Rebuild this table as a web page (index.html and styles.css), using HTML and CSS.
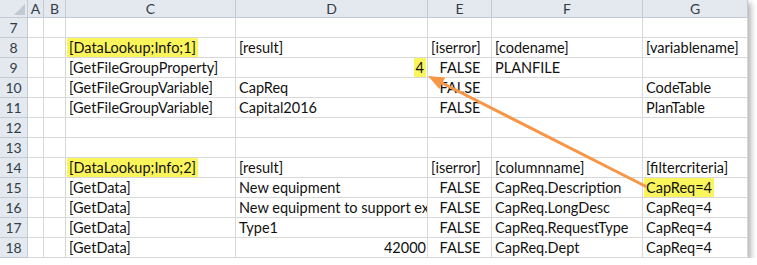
FILE: index.html
```html
<!DOCTYPE html>
<html>
<head>
	<title>DataLookup sheet</title>
	<link rel="stylesheet" href="styles.css">
</head>
<body>
	<div class="sheet">
		<div class="grid">
			<!-- column headers -->
			<div class="hd corner"><span class="tri"></span></div>
			<div class="hd">A</div>
			<div class="hd">B</div>
			<div class="hd">C</div>
			<div class="hd">D</div>
			<div class="hd">E</div>
			<div class="hd">F</div>
			<div class="hd">G</div>

			<div class="rn">7</div>
			<div class="c"></div><div class="c"></div><div class="c"></div><div class="c"></div><div class="c"></div><div class="c"></div><div class="c"></div>

			<div class="rn">8</div>
			<div class="c"></div><div class="c"></div>
			<div class="c"><span class="hl">[DataLookup;Info;1]</span></div>
			<div class="c">[result]</div>
			<div class="c">[iserror]</div>
			<div class="c">[codename]</div>
			<div class="c">[variablename]</div>

			<div class="rn">9</div>
			<div class="c"></div><div class="c"></div>
			<div class="c">[GetFileGroupProperty]</div>
			<div class="c num"><span class="hl hl-num">4</span></div>
			<div class="c bool">FALSE</div>
			<div class="c">PLANFILE</div>
			<div class="c"></div>

			<div class="rn">10</div>
			<div class="c"></div><div class="c"></div>
			<div class="c">[GetFileGroupVariable]</div>
			<div class="c">CapReq</div>
			<div class="c bool">FALSE</div>
			<div class="c"></div>
			<div class="c">CodeTable</div>

			<div class="rn">11</div>
			<div class="c"></div><div class="c"></div>
			<div class="c">[GetFileGroupVariable]</div>
			<div class="c">Capital2016</div>
			<div class="c bool">FALSE</div>
			<div class="c"></div>
			<div class="c">PlanTable</div>

			<div class="rn">12</div>
			<div class="c"></div><div class="c"></div><div class="c"></div><div class="c"></div><div class="c"></div><div class="c"></div><div class="c"></div>

			<div class="rn">13</div>
			<div class="c"></div><div class="c"></div><div class="c"></div><div class="c"></div><div class="c"></div><div class="c"></div><div class="c"></div>

			<div class="rn">14</div>
			<div class="c"></div><div class="c"></div>
			<div class="c"><span class="hl">[DataLookup;Info;2]</span></div>
			<div class="c">[result]</div>
			<div class="c">[iserror]</div>
			<div class="c">[columnname]</div>
			<div class="c">[filtercriteria]</div>

			<div class="rn">15</div>
			<div class="c"></div><div class="c"></div>
			<div class="c">[GetData]</div>
			<div class="c">New equipment</div>
			<div class="c bool">FALSE</div>
			<div class="c">CapReq.Description</div>
			<div class="c"><span class="hl">CapReq=4</span></div>

			<div class="rn">16</div>
			<div class="c"></div><div class="c"></div>
			<div class="c">[GetData]</div>
			<div class="c">New equipment to support expansion</div>
			<div class="c bool">FALSE</div>
			<div class="c">CapReq.LongDesc</div>
			<div class="c">CapReq=4</div>

			<div class="rn">17</div>
			<div class="c"></div><div class="c"></div>
			<div class="c">[GetData]</div>
			<div class="c">Type1</div>
			<div class="c bool">FALSE</div>
			<div class="c">CapReq.RequestType</div>
			<div class="c">CapReq=4</div>

			<div class="rn">18</div>
			<div class="c"></div><div class="c"></div>
			<div class="c">[GetData]</div>
			<div class="c num">42000</div>
			<div class="c bool">FALSE</div>
			<div class="c">CapReq.Dept</div>
			<div class="c">CapReq=4</div>
		</div>

		<!-- callout arrow from the filter back to the looked-up value -->
		<svg class="arrow" width="748" height="258" viewBox="0 0 748 258">
			<line x1="645" y1="186" x2="441" y2="82.5" stroke="#f79646" stroke-width="3" stroke-linecap="round"/>
			<polygon points="428,76 445.2,77.4 439.4,89" fill="#f79646"/>
		</svg>
	</div>
</body>
</html>
```

FILE: styles.css
```css
body {
	margin: 0;
	background: #fff;
	font-family: Lato, "Liberation Sans", sans-serif;
}

.sheet {
	position: relative;
	width: 748px;
	height: 258px;
	box-shadow: 3px 3px 6px rgba(0, 0, 0, 0.3);
	overflow: hidden;
}

.grid {
	display: grid;
	grid-template-columns: 28px 16px 22px 170px 192px 64px 151px 105px;
	grid-template-rows: 18px repeat(12, 20px);
}

.hd, .rn {
	background: #e4e9f0;
	color: #333c47;
	font-size: 14px;
	box-sizing: border-box;
	border-right: 1px solid #c3cad4;
	border-bottom: 1px solid #c3cad4;
	display: flex;
	align-items: center;
	justify-content: center;
}

.hd {
	line-height: 17px;
}

.corner {
	position: relative;
}

.tri {
	position: absolute;
	right: 2px;
	bottom: 2px;
	width: 0;
	height: 0;
	border-left: 11px solid transparent;
	border-bottom: 11px solid #c3c9d1;
}

.c {
	box-sizing: border-box;
	border-right: 1px solid #d8d8d8;
	border-bottom: 1px solid #d8d8d8;
	padding: 0 2px 0 3px;
	font-size: 14.5px;
	line-height: 19px;
	color: #111;
	white-space: nowrap;
	overflow: hidden;
}

.num {
	text-align: right;
	padding-right: 1px;
}

.bool {
	text-align: center;
}

.hl {
	background: #fbf55c;
	display: inline-block;
	margin-left: -2px;
	padding: 0 2px;
}

.hl-num {
	margin-left: 0;
}

.arrow {
	position: absolute;
	left: 0;
	top: 0;
	pointer-events: none;
}
```
